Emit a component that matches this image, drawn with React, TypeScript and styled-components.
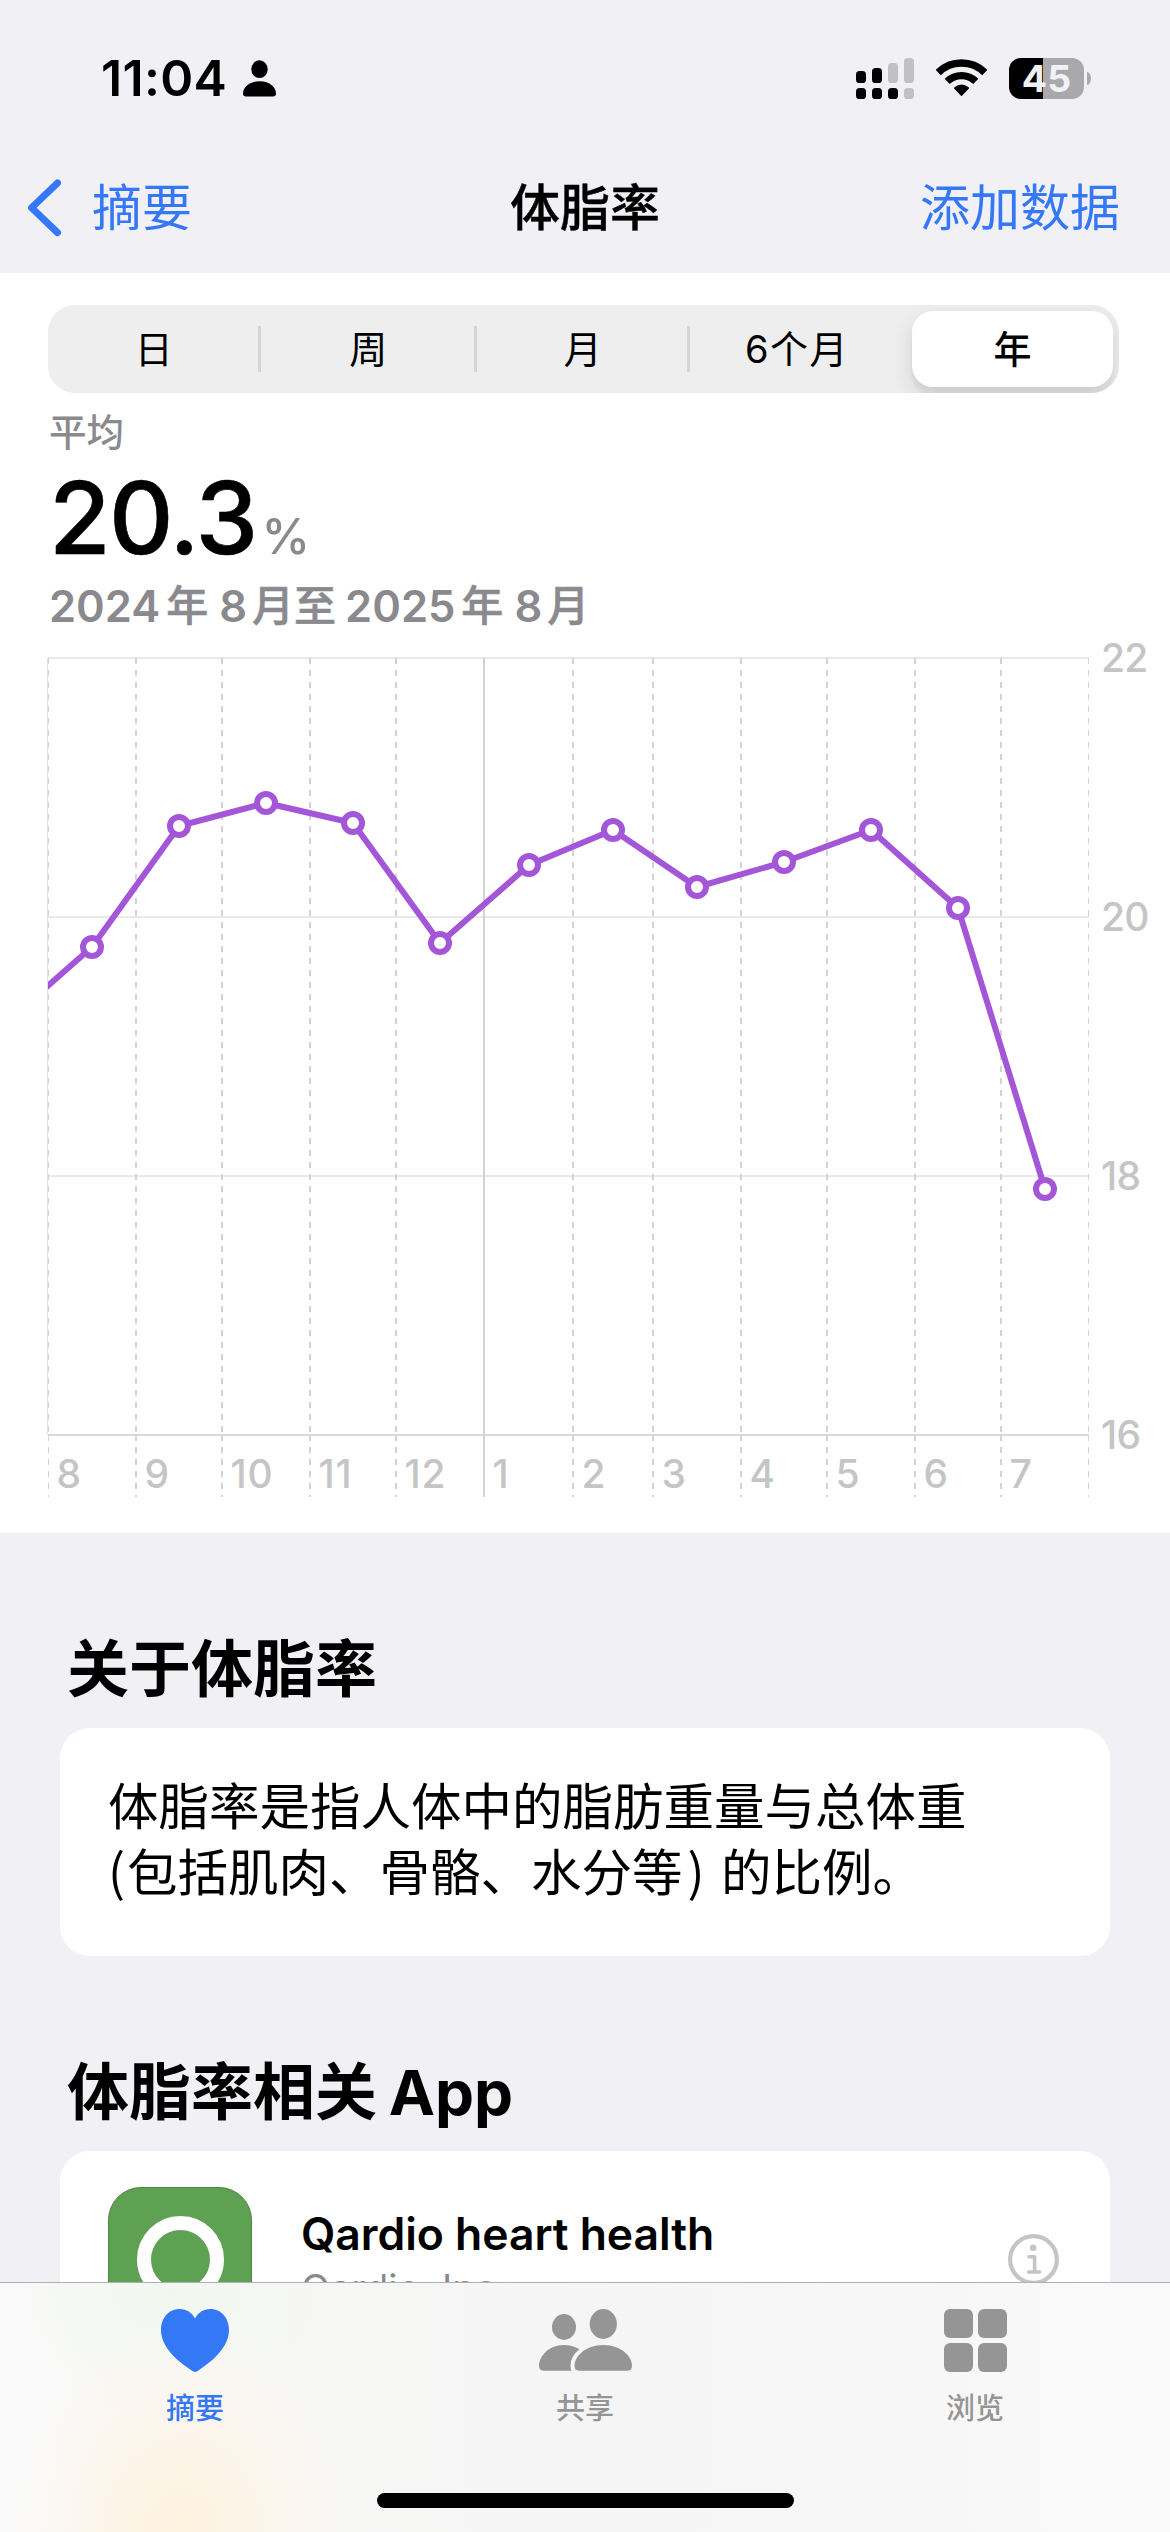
import React from "react";
import styled, { createGlobalStyle } from "styled-components";

const SANS = `Inter, "Noto Sans CJK SC", sans-serif`;
const CJK = `"Noto Sans CJK SC", sans-serif`;
const BLUE = "#3478f6";
const CANVAS = "#f1f0f5";
const PURPLE = "#a356d7";

const GlobalStyle = createGlobalStyle`
  * { box-sizing: border-box; }
  body { margin: 0; background: ${CANVAS}; }
  h1, h2, p { margin: 0; }
`;

const Screen = styled.div`
  width: 1170px;
  height: 2532px;
  display: flex;
  flex-direction: column;
  overflow: hidden;
  background: ${CANVAS};
  color: #000;
  font-family: ${SANS};
`;

const StatusBar = styled.header`
  flex: none;
  height: 156px;
  padding: 0 79px 0 101px;
  display: flex;
  align-items: center;
  justify-content: space-between;
`;

const StatusGroup = styled.div<{ $gap: number }>`
  display: flex;
  align-items: center;
  gap: ${(p) => p.$gap}px;
`;

const Clock = styled.span`
  font-size: 50px;
  line-height: 60px;
  font-weight: 600;
  letter-spacing: 0.3px;
`;

const Battery = styled.div`
  display: flex;
  align-items: center;
  gap: 3px;
`;

const BatteryBody = styled.div<{ $level: number }>`
  width: 75px;
  height: 41px;
  border-radius: 12px;
  display: flex;
  align-items: center;
  justify-content: center;
  color: ${CANVAS};
  font-size: 37.5px;
  line-height: 41px;
  font-weight: 700;
  background: linear-gradient(90deg, #000 ${(p) => p.$level}%, #a9a9ab ${(p) => p.$level}%);
`;

const BatteryNub = styled.div`
  width: 4px;
  height: 13px;
  border-radius: 0 4px 4px 0 / 0 6.5px 6.5px 0;
  background: #a9a9ab;
`;

const NavBar = styled.nav`
  flex: none;
  height: 117px;
  padding: 0 28px 14px;
  display: grid;
  grid-template-columns: 1fr auto 1fr;
  align-items: center;
  font-size: 50px;
  line-height: 66px;
`;

const BackButton = styled.div`
  display: flex;
  align-items: center;
  gap: 29px;
  color: ${BLUE};
`;

const NavTitle = styled.h1`
  font-size: 50px;
  font-weight: 500;
  -webkit-text-stroke: 0.4px #000;
`;

const NavAction = styled.div`
  justify-self: end;
  margin-right: 22px;
  color: ${BLUE};
`;

const Scroll = styled.main`
  flex: 1;
  min-height: 0;
  overflow: hidden;
`;

const ChartPanel = styled.section`
  height: 1260px;
  padding-top: 32px;
  background: #fff;
`;

const Segmented = styled.div`
  height: 88px;
  margin: 0 51px 0 48px;
  border-radius: 27px;
  background: #eeeeee;
  display: grid;
  grid-template-columns: 213px 216px 213px 214px 1fr;
  align-items: center;
  overflow: hidden;
`;

const Segment = styled.div<{ $divider?: boolean }>`
  height: 46px;
  padding-left: 3px;
  display: flex;
  align-items: center;
  justify-content: center;
  border-right: 3px solid ${(p) => (p.$divider ? "#d5d5d6" : "transparent")};
  font-size: 38px;
  line-height: 46px;
  letter-spacing: 1.5px;
`;

const SelectedSegment = styled.div`
  height: 76px;
  margin: 0 6px 0 8px;
  border-radius: 21px;
  background: #fff;
  box-shadow: 0 9px 24px rgba(0, 0, 0, 0.12), 0 9px 3px rgba(0, 0, 0, 0.04);
  display: flex;
  align-items: center;
  justify-content: center;
  font-size: 38px;
  line-height: 46px;
  font-weight: 500;
`;

const Summary = styled.div`
  height: 227px;
  padding: 15px 0 0 49px;
`;

const SummaryLabel = styled.div`
  font-size: 37.5px;
  line-height: 50px;
  font-weight: 500;
  color: #8a8a8e;
`;

const SummaryValue = styled.div`
  margin: 5px 0 3px;
  display: flex;
  align-items: baseline;
  gap: 5px;
  font-size: 100px;
  line-height: 110px;
  font-weight: 500;
  letter-spacing: -1.6px;
  -webkit-text-stroke: 0.6px #000;
`;

const Unit = styled.span`
  font-size: 49px;
  line-height: 49px;
  font-weight: 500;
  color: #8a8a8e;
  letter-spacing: -1px;
  -webkit-text-stroke: 0;
`;

const DateRange = styled.div`
  display: flex;
  align-items: center;
  font-size: 43.5px;
  line-height: 60px;
  font-weight: 600;
  color: #8a8a8e;
`;

const Han = styled.span<{ $before?: number; $after?: number }>`
  font-size: 42px;
  font-weight: 500;
  -webkit-text-stroke: 0.6px #8a8a8e;
  padding: 0 ${(p) => p.$after ?? 0}px 0 ${(p) => p.$before ?? 0}px;
`;

const Chart = styled.svg`
  display: block;
  font-family: ${SANS};
  font-size: 39px;
  font-weight: 500;
  fill: #c5c5c6;
`;

const Section = styled.section`
  padding: 97px 60px 0;
`;

const SectionTitle = styled.h2`
  height: 80px;
  margin: 0 0 18px 7px;
  font-size: 62px;
  line-height: 80px;
  font-weight: 700;
  word-spacing: -3px;
`;

const Card = styled.div`
  border-radius: 30px;
  background: #fff;
`;

const AboutCard = styled(Card)`
  height: 228px;
  padding: 42px 48px 0;
`;

const AboutText = styled.p`
  font-family: ${CJK};
  font-size: 50.5px;
  line-height: 66px;
`;

const Paren = styled.span<{ $before: number; $after: number }>`
  padding: 0 ${(p) => p.$after}px 0 ${(p) => p.$before}px;
`;

const AppCard = styled(Card)`
  height: 216px;
  padding: 0 51px 0 48px;
  display: flex;
  align-items: center;
`;

const AppIcon = styled.div`
  width: 144px;
  height: 144px;
  border-radius: 33px;
  border: 1px solid #4c8641;
  background: #5fa152;
  display: flex;
  align-items: center;
  justify-content: center;
`;

const Ring = styled.div`
  width: 87px;
  height: 87px;
  border-radius: 50%;
  border: 14px solid #fff;
`;

const AppInfo = styled.div`
  flex: 1;
  padding-left: 49px;
  display: flex;
  flex-direction: column;
  gap: 3px;
`;

const AppName = styled.div`
  font-size: 44.5px;
  line-height: 54px;
  font-weight: 600;
  letter-spacing: -0.05px;
`;

const AppVendor = styled.div`
  font-size: 38px;
  line-height: 48px;
  color: #8a8a8e;
`;

const TabBar = styled.footer`
  flex: none;
  height: 250px;
  border-top: 1px solid #b0b0b4;
  display: flex;
  flex-direction: column;
  justify-content: space-between;
  align-items: center;
  padding-bottom: 24px;
  background:
    radial-gradient(ellipse 170px 215px at 180px 255px, rgba(253, 243, 222, 0.95), rgba(253, 244, 230, 0.85) 45%, rgba(253, 245, 236, 0.5) 72%, rgba(253, 246, 238, 0) 100%),
    radial-gradient(ellipse 180px 130px at 170px 10px, rgba(241, 247, 239, 0.9), rgba(243, 248, 241, 0) 100%),
    linear-gradient(90deg, #fafafa 0%, #f7f7f6 20%, #f5f5f5 50%, #f7f7f7 80%, #fafafa 100%);
`;

const Tabs = styled.div`
  width: 100%;
  display: grid;
  grid-template-columns: repeat(3, 1fr);
  padding-top: 24px;
`;

const Tab = styled.div<{ $active?: boolean }>`
  display: flex;
  flex-direction: column;
  align-items: center;
  gap: 16px;
  color: ${(p) => (p.$active ? BLUE : "#959595")};
  font-size: 29px;
  line-height: 40px;
  font-weight: 500;
`;

const TabIcon = styled.div`
  height: 66px;
  display: flex;
  align-items: center;
`;

const HomeIndicator = styled.div`
  width: 417px;
  height: 15px;
  border-radius: 8px;
  background: #000;
`;

const PersonIcon = () => (
  <svg width="33" height="37" viewBox="0 0 33 37">
    <ellipse cx="16.5" cy="9.2" rx="8.2" ry="8.9" />
    <path d="M0 33.5C0 27.5 6 21.2 16.5 21.2S33 27.5 33 33.5Q33 36.4 30 36.4H3Q0 36.4 0 33.5Z" />
  </svg>
);

const signalColumns = [
  { top: 13, height: 12, on: true, lower: true },
  { top: 10, height: 15, on: true, lower: true },
  { top: 5, height: 20, on: false, lower: true },
  { top: 0, height: 25, on: false, lower: false },
];

const SignalIcon = () => (
  <svg width="58" height="41" viewBox="0 0 58 41">
    {signalColumns.map((c, i) => (
      <g key={i}>
        <rect x={i * 16} y={c.top} width="10" height={c.height} rx="3.6" fill={c.on ? "#000" : "#c1c0c5"} />
        <rect x={i * 16} y="30" width="10" height="11" rx="3.6" fill={c.lower ? "#000" : "#c1c0c5"} />
      </g>
    ))}
  </svg>
);

const WifiIcon = () => (
  <svg width="51" height="38" viewBox="0 0 51 38" fill="none" stroke="#000">
    <path d="M2.2 13.6A33.2 33.2 0 0 1 48.8 13.6" strokeWidth="7.4" />
    <path d="M11.2 22.4A20.6 20.6 0 0 1 39.8 22.4" strokeWidth="7.4" />
    <path d="M25.5 36.3L18.6 29Q25.5 23.4 32.4 29Z" fill="#000" strokeWidth="1.4" strokeLinejoin="round" />
  </svg>
);

const ChevronIcon = () => (
  <svg width="35" height="58" viewBox="0 0 35 58">
    <path d="M29.5 4L3.6 28.8L29.5 53.6" fill="none" stroke={BLUE} strokeWidth="7" strokeLinecap="round" strokeLinejoin="round" />
  </svg>
);

const InfoIcon = () => (
  <svg width="51" height="51" viewBox="0 0 51 51" fill="none" stroke="#c5c5c7">
    <circle cx="25.5" cy="25.5" r="23.4" strokeWidth="4.2" />
    <circle cx="25.2" cy="13.8" r="3.3" fill="#c5c5c7" stroke="none" />
    <path d="M21 22.8H26.6V38M20.6 38H31.6" strokeWidth="3.6" strokeLinecap="round" strokeLinejoin="round" />
  </svg>
);

const HeartIcon = () => (
  <svg width="68" height="63" viewBox="0 0 68 63" fill="currentColor">
    <path d="M34 63C33 63 31.4 62 30 61C12.500 49.500 0 36 0 21C0 8.500 8.300 0 18.800 0C25.500 0 31 3.600 34 9.500C37 3.600 42.500 0 49.200 0C59.700 0 68 8.500 68 21C68 36 55.500 49.500 38 61C36.600 62 35 63 34 63Z" />
  </svg>
);

const PeopleIcon = () => {
  const front = "M35.500 56.500C35.500 48 46 36 64.300 36S93 48 93 56.500Q93 61.700 88.500 61.700H40Q35.500 61.700 35.500 56.500Z";
  return (
    <svg width="93" height="62" viewBox="0 0 93 62" fill="currentColor">
      <ellipse cx="25" cy="18" rx="12" ry="12.900" />
      <path d="M0 56.500C0 48 9 36 25 36C33 36 40 39 45 44V61.700H4.500Q0 61.700 0 56.500Z" />
      <path d={front} fill="#f5f5f5" stroke="#f5f5f5" strokeWidth="8" />
      <ellipse cx="64.300" cy="15" rx="13.600" ry="15" />
      <path d={front} />
    </svg>
  );
};

const GridIcon = () => (
  <svg width="63" height="63" viewBox="0 0 63 63" fill="currentColor">
    {[0, 34].map((x) =>
      [0, 34].map((y) => <rect key={`${x}-${y}`} x={x} y={y} width="29" height="29" rx="6" />)
    )}
  </svg>
);

/* Chart geometry, in page pixels. */
const TOP = 658;
const BASE = 1435;
const FOOT = 1497;
const LEFT = 48;
const RIGHT = 1089;
const Y_STEP = 259;

const months = [
  { x: 48, label: "8" },
  { x: 136, label: "9" },
  { x: 222, label: "10" },
  { x: 310, label: "11" },
  { x: 396, label: "12" },
  { x: 484, label: "1", solid: true },
  { x: 573, label: "2" },
  { x: 653, label: "3" },
  { x: 741, label: "4" },
  { x: 827, label: "5" },
  { x: 915, label: "6" },
  { x: 1001, label: "7" },
];

const points: [number, number][] = [
  [92, 947], [179, 826], [266, 803], [353, 823], [440, 943], [529, 865],
  [613, 830], [697, 887], [784, 862], [871, 830], [958, 908], [1045, 1189],
];

const BodyFatChart = () => (
  <Chart width="1170" height="890" viewBox="0 620 1170 890">
    <defs>
      <clipPath id="plot">
        <rect x={LEFT} y={TOP - 1} width={RIGHT - LEFT} height={FOOT - TOP + 1} />
      </clipPath>
    </defs>
    <path d={`M${LEFT - 0.5} ${TOP}V${BASE}`} stroke="#e3e3e4" />
    <g clipPath="url(#plot)">
      {[22, 20, 18, 16].map((v, i) => (
        <path key={v} d={`M${LEFT} ${TOP + i * Y_STEP}H${RIGHT}`} stroke={v === 16 ? "#d9d9da" : "#e9e9ea"} strokeWidth="2" />
      ))}
      {[...months, { x: RIGHT, label: "", solid: false }].map((m) => (
        <g key={m.x} stroke="#d3d3d4" strokeWidth="2" strokeDasharray={m.solid ? undefined : "6 6"}>
          <path d={`M${m.x} ${TOP}V${BASE}`} />
          <path d={`M${m.x} ${BASE}V${FOOT}`} />
        </g>
      ))}
      <polyline
        points={[[26, 1005], ...points].map((p) => p.join(",")).join(" ")}
        fill="none"
        stroke={PURPLE}
        strokeWidth="6"
        strokeLinejoin="round"
      />
    </g>
    {points.map(([x, y]) => (
      <circle key={x} cx={x} cy={y} r="9" fill="#fff" stroke={PURPLE} strokeWidth="6" />
    ))}
    {months.map((m) => (
      <text key={m.x} x={m.x + 8.5} y={1488} letterSpacing="0.9">{m.label}</text>
    ))}
    {[22, 20, 18, 16].map((v, i) => (
      <text key={v} x="1101" y={672 + i * Y_STEP} letterSpacing="-0.8">{v}</text>
    ))}
  </Chart>
);

export default function App() {
  return (
    <Screen>
      <GlobalStyle />
      <StatusBar>
        <StatusGroup $gap={16}>
          <Clock>11:04</Clock>
          <PersonIcon />
        </StatusGroup>
        <StatusGroup $gap={22}>
          <SignalIcon />
          <WifiIcon />
          <Battery>
            <BatteryBody $level={45}>45</BatteryBody>
            <BatteryNub />
          </Battery>
        </StatusGroup>
      </StatusBar>

      <NavBar>
        <BackButton>
          <ChevronIcon />
          <span>摘要</span>
        </BackButton>
        <NavTitle>体脂率</NavTitle>
        <NavAction>添加数据</NavAction>
      </NavBar>

      <Scroll>
        <ChartPanel>
          <Segmented>
            <Segment $divider>日</Segment>
            <Segment $divider>周</Segment>
            <Segment $divider>月</Segment>
            <Segment>6个月</Segment>
            <SelectedSegment>年</SelectedSegment>
          </Segmented>
          <Summary>
            <SummaryLabel>平均</SummaryLabel>
            <SummaryValue>
              20.3<Unit>%</Unit>
            </SummaryValue>
            <DateRange>
              2024<Han $before={6} $after={11}>年</Han>8<Han $before={5} $after={9}>月至</Han>2025<Han $before={6} $after={11}>年</Han>8<Han $before={5}>月</Han>
            </DateRange>
          </Summary>
          <BodyFatChart />
        </ChartPanel>

        <Section>
          <SectionTitle>关于体脂率</SectionTitle>
          <AboutCard>
            <AboutText>
              体脂率是指人体中的脂肪重量与总体重
              <br />
              <Paren $before={0} $after={2}>(</Paren>包括肌肉、骨骼、水分等<Paren $before={5} $after={5}>)</Paren> 的比例。
            </AboutText>
          </AboutCard>
        </Section>

        <Section>
          <SectionTitle>体脂率相关 App</SectionTitle>
          <AppCard>
            <AppIcon>
              <Ring />
            </AppIcon>
            <AppInfo>
              <AppName>Qardio heart health</AppName>
              <AppVendor>Qardio, Inc.</AppVendor>
            </AppInfo>
            <InfoIcon />
          </AppCard>
        </Section>
      </Scroll>

      <TabBar>
        <Tabs>
          <Tab $active>
            <TabIcon><HeartIcon /></TabIcon>
            摘要
          </Tab>
          <Tab>
            <TabIcon><PeopleIcon /></TabIcon>
            共享
          </Tab>
          <Tab>
            <TabIcon><GridIcon /></TabIcon>
            浏览
          </Tab>
        </Tabs>
        <HomeIndicator />
      </TabBar>
    </Screen>
  );
}
